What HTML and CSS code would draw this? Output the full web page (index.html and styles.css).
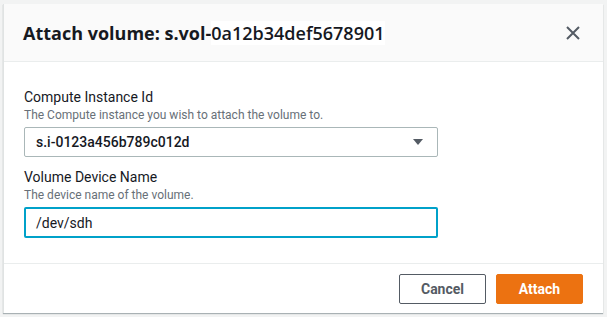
FILE: index.html
```html
<!DOCTYPE html>
<html>
<head>
<meta charset="utf-8">
<link rel="stylesheet" href="styles.css">
</head>
<body>
<div class="page">
  <div class="modal">
    <div class="modal-header">
      <h2 class="modal-title">Attach volume: s.vol-<span class="title-id">0a12b34def5678901</span></h2>
      <button class="close" aria-label="Close">
        <svg width="14" height="14" viewBox="0 0 14 14"><path d="M1 1L13 13M13 1L1 13" stroke="#545b64" stroke-width="2" fill="none"/></svg>
      </button>
    </div>
    <div class="modal-body">
      <div class="field">
        <div class="label">Compute Instance Id</div>
        <div class="desc">The Compute instance you wish to attach the volume to.</div>
        <div class="select">
          <span class="select-value">s.i-0123a456b789c012d</span>
          <svg class="caret" width="12" height="8" viewBox="0 0 12 8"><path d="M1 1H11L6 7Z" fill="#545b64"/></svg>
        </div>
      </div>
      <div class="field">
        <div class="label">Volume Device Name</div>
        <div class="desc">The device name of the volume.</div>
        <div class="input">/dev/sdh</div>
      </div>
    </div>
    <div class="modal-footer">
      <button class="btn btn-normal">Cancel</button>
      <button class="btn btn-primary">Attach</button>
    </div>
  </div>
</div>
</body>
</html>
```

FILE: styles.css
```css
html, body {
  margin: 0;
  padding: 0;
  background: #f2f3f3;
}
body {
  font-family: Roboto, "Liberation Sans", sans-serif;
  color: #16191f;
}
.page {
  padding: 4px 4px 4px 3px;
}
.modal {
  width: 600px;
  height: 309px;
  background: #fff;
  box-sizing: border-box;
  border-left: 1px solid #e0e3e3;
  box-shadow: 0 1px 1px rgba(0,28,36,0.3);
  display: flex;
  flex-direction: column;
}
.modal-header {
  height: 58px;
  box-sizing: border-box;
  background: #fafafa;
  border-bottom: 1px solid #eaeded;
  display: flex;
  align-items: center;
  padding: 0 20px 0 19px;
}
.modal-title {
  flex: 1;
  margin: 0;
  font-family: "Open Sans", Roboto, sans-serif;
  font-size: 18px;
  font-weight: 700;
  line-height: 22px;
  padding-top: 1px;
}
.title-id {
  font-weight: 600;
  background: #fff;
}
.close {
  border: 0;
  background: none;
  padding: 0;
  width: 16px;
  height: 16px;
  display: flex;
  align-items: center;
  justify-content: center;
  margin-right: 2px;
}
.modal-body {
  flex: 1;
  padding: 25px 20px 0 20px;
  border-bottom: 1px solid #eaeded;
}
.field {
  width: 414px;
  margin-bottom: 10px;
}
.label {
  font-size: 14px;
  line-height: 20px;
}
.desc {
  font-size: 12px;
  line-height: 16px;
  color: #687078;
  margin-bottom: 4px;
}
.select {
  height: 30px;
  box-sizing: border-box;
  border: 1px solid #aab7b8;
  border-radius: 2px;
  display: flex;
  align-items: center;
  padding: 0 13px 0 11px;
}
.select-value {
  flex: 1;
  font-size: 14px;
  font-weight: 500;
}
.input {
  height: 31px;
  box-sizing: border-box;
  border: 2px solid #00a1c9;
  border-radius: 2px;
  display: flex;
  align-items: center;
  padding: 0 10px;
  font-size: 14px;
}
.modal-footer {
  height: 49px;
  display: flex;
  justify-content: flex-end;
  align-items: flex-start;
  gap: 10px;
  padding: 10px 20px 0 0;
  box-sizing: border-box;
}
.btn {
  width: 87px;
  height: 30px;
  box-sizing: border-box;
  border-radius: 2px;
  font-family: inherit;
  font-size: 14px;
  font-weight: 700;
  padding: 0;
}
.btn-normal {
  background: #fff;
  border: 1px solid #545b64;
  color: #545b64;
}
.btn-primary {
  background: #ec7211;
  border: 1px solid #ec7211;
  color: #fff;
}
```
